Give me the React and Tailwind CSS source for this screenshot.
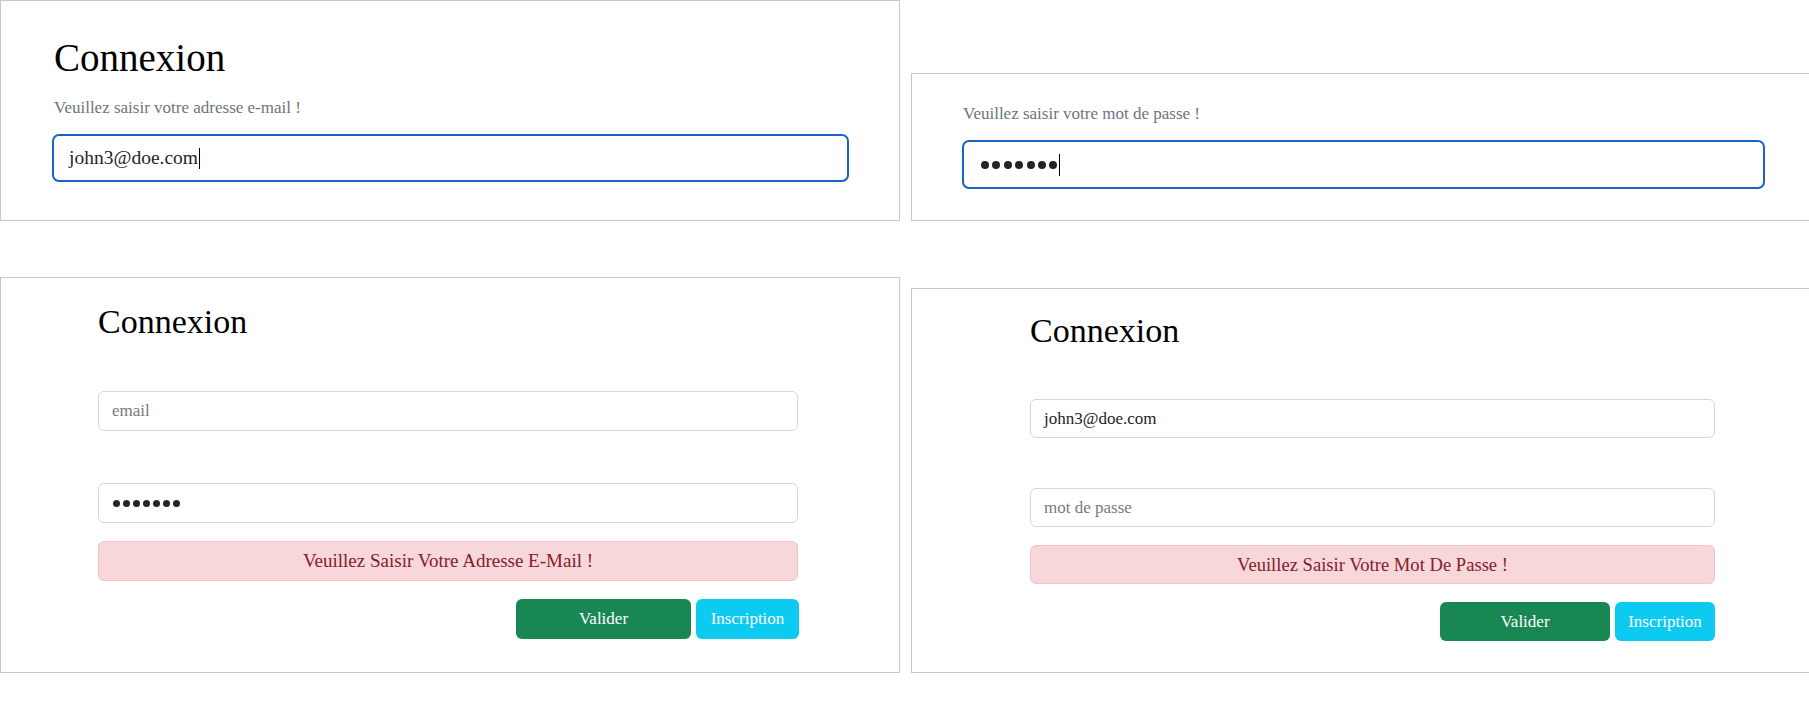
import React from "react";

function Dots7({ big }) {
  const cls = big
    ? "w-[8px] h-[8px] rounded-full bg-[#212529]"
    : "w-[7px] h-[7px] rounded-full bg-[#212529]";
  return (
    <span className={big ? "flex items-center gap-[3.4px]" : "flex items-center gap-[3px]"} aria-label="•••••••">
      {[0, 1, 2, 3, 4, 5, 6].map((i) => (
        <span key={i} className={cls} />
      ))}
    </span>
  );
}

export default function App() {
  return (
    <div className="w-[1809px] h-[715px] overflow-hidden bg-white font-['Liberation_Serif','Times_New_Roman',serif] text-[#212529]">
      {/* Top row */}
      <div className="flex items-end gap-[11px]">
        {/* Top-left */}
        <div className="w-[900px] shrink-0 border border-[#c8c8c8] pt-[33px] pl-[51px] pb-[38px]">
          <h1 className="pl-[2px] text-[39px] leading-[47px] text-black">Connexion</h1>
          <p className="pl-[2px] mt-[14px] text-[17px] leading-[25px] text-[#6c757d]">
            Veuillez saisir votre adresse e-mail !
          </p>
          <div className="mt-[14px] w-[797px] h-[48px] border-2 border-[#1a63c6] rounded-[7px] pl-[15px] flex items-center text-[19.5px] text-[#212529]">
            <span>john3@doe.com</span>
            <span className="ml-px w-px h-[21px] bg-black" />
          </div>
        </div>
        {/* Top-right */}
        <div className="w-[910px] shrink-0 border border-[#c8c8c8] pt-[27px] pl-[50px] pb-[31px]">
          <p className="pl-px text-[17px] leading-[25px] text-[#6c757d]">
            Veuillez saisir votre mot de passe !
          </p>
          <div className="mt-[14px] w-[803px] h-[49px] border-2 border-[#1a63c6] rounded-[7px] pl-[17px] flex items-center">
            <Dots7 big />
            <span className="ml-[2px] w-px h-[22px] bg-black" />
          </div>
        </div>
      </div>

      {/* Bottom row */}
      <div className="mt-[56px] flex items-end gap-[11px]">
        {/* Bottom-left */}
        <div className="w-[900px] shrink-0 border border-[#c8c8c8] pt-[23px] pl-[97px] pb-[33px]">
          <h1 className="text-[34px] leading-[41px] text-black">Connexion</h1>
          <div className="mt-[49px] w-[700px] h-[40px] border border-[#d3d7dc] rounded-[6px] pl-[13px] flex items-center text-[17px] text-[#7a7a7a]">
            email
          </div>
          <div className="mt-[52px] w-[700px] h-[40px] border border-[#d3d7dc] rounded-[6px] pl-[14px] flex items-center">
            <Dots7 />
          </div>
          <div className="mt-[18px] w-[700px] h-[40px] border border-[#f5c2c7] bg-[#f8d7da] rounded-[6px] flex items-center justify-center text-[19px] text-[#842029]">
            Veuillez Saisir Votre Adresse E-Mail !
          </div>
          <div className="mt-[18px] w-[701px] flex justify-end gap-[5px]">
            <button className="w-[175px] h-[40px] rounded-[6px] bg-[#198754] text-white text-[17px]">
              Valider
            </button>
            <button className="w-[103px] h-[40px] rounded-[6px] bg-[#0dcaf0] text-white text-[17px]">
              Inscription
            </button>
          </div>
        </div>
        {/* Bottom-right */}
        <div className="w-[910px] shrink-0 border border-[#c8c8c8] pt-[21px] pl-[118px] pb-[31px]">
          <h1 className="text-[34px] leading-[41px] text-black">Connexion</h1>
          <div className="mt-[48px] w-[685px] h-[39px] border border-[#d3d7dc] rounded-[6px] pl-[13px] flex items-center text-[17px] text-[#212529]">
            john3@doe.com
          </div>
          <div className="mt-[50px] w-[685px] h-[39px] border border-[#d3d7dc] rounded-[6px] pl-[13px] flex items-center text-[17px] text-[#7a7a7a]">
            mot de passe
          </div>
          <div className="mt-[18px] w-[685px] h-[39px] border border-[#f5c2c7] bg-[#f8d7da] rounded-[6px] flex items-center justify-center text-[18.6px] text-[#842029]">
            Veuillez Saisir Votre Mot De Passe !
          </div>
          <div className="mt-[18px] w-[685px] flex justify-end gap-[5px]">
            <button className="w-[170px] h-[39px] rounded-[6px] bg-[#198754] text-white text-[17px]">
              Valider
            </button>
            <button className="w-[100px] h-[39px] rounded-[6px] bg-[#0dcaf0] text-white text-[17px]">
              Inscription
            </button>
          </div>
        </div>
      </div>
    </div>
  );
}
